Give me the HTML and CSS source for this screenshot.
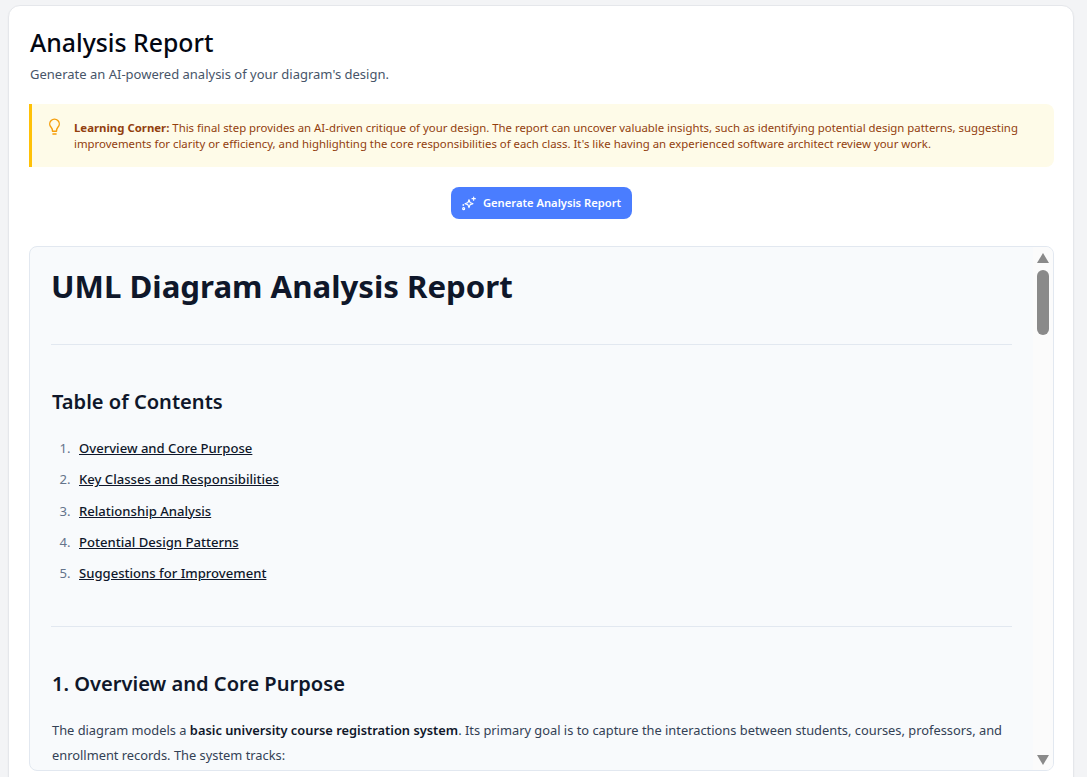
FILE: index.html
```html
<!DOCTYPE html>
<html lang="en">
<head>
    <meta charset="UTF-8">
    <title>Analysis Report</title>
    <link rel="stylesheet" href="styles.css">
</head>
<body>
<div class="card">
    <div class="page-head">
        <h2 class="page-title">Analysis Report</h2>
        <p class="page-sub">Generate an AI-powered analysis of your diagram's design.</p>
    </div>

    <div class="tip">
        <svg class="tip-icon" viewBox="0 0 24 24" fill="none" stroke="currentColor" stroke-width="1.8" stroke-linecap="round" stroke-linejoin="round">
            <path d="M9.500 18h5M10 21.500h4M9.500 18c0-2.500-.5-3.500-1.800-5a6 6 0 1 1 8.600 0c-1.300 1.500-1.800 2.500-1.800 5"/>
        </svg>
        <p><strong>Learning Corner:</strong> This final step provides an AI-driven critique of your design. The report can uncover valuable insights, such as identifying potential design patterns, suggesting improvements for clarity or efficiency, and highlighting the core responsibilities of each class. It's like having an experienced software architect review your work.</p>
    </div>

    <div class="action">
        <button class="gen-btn">
            <svg viewBox="0 0 24 24" fill="none" stroke="currentColor" stroke-width="1.7" stroke-linecap="round" stroke-linejoin="round">
                <path d="M12 7l1.600 4.400 4.400 1.600-4.400 1.600L12 19l-1.600-4.400L6 13l4.400-1.600z"/>
                <path d="M19 3v5M16.500 5.500h5"/>
                <circle cx="4" cy="20.500" r="1.500"/>
                <circle cx="3.500" cy="15" r=".5"/>
            </svg>
            <span class="gen-label">Generate Analysis Report</span>
        </button>
    </div>

    <div class="report-box">
        <div class="report">
            <h1>UML Diagram Analysis Report</h1>
            <hr>
            <h2>Table of Contents</h2>
            <ol>
                <li><a href="#">Overview and Core Purpose</a></li>
                <li><a href="#">Key Classes and Responsibilities</a></li>
                <li><a href="#">Relationship Analysis</a></li>
                <li><a href="#">Potential Design Patterns</a></li>
                <li><a href="#">Suggestions for Improvement</a></li>
            </ol>
            <hr>
            <h2>1. Overview and Core Purpose</h2>
            <p>The diagram models a <strong>basic university course registration system</strong>. Its primary goal is to capture the interactions between students, courses, professors, and enrollment records. The system tracks:</p>
        </div>
        <div class="scrollbar">
            <span class="arrow-up"></span>
            <span class="thumb"></span>
            <span class="arrow-down"></span>
        </div>
    </div>
</div>
</body>
</html>
```

FILE: styles.css
```css
* {
    box-sizing: border-box;
}

html, body {
    height: 100%;
}

body {
    margin: 0;
    padding: 5px 13px 0 8px;
    background: #f3f4f6;
    font-family: "Noto Sans", "Open Sans", sans-serif;
    color: #0f172a;
    overflow: hidden;
}

.card {
    background: #fff;
    border: 1px solid #e5e7eb;
    border-radius: 12px;
    padding: 20px 19px 0 20px;
    height: 790px;
    box-shadow: 0 1px 2px rgba(0, 0, 0, 0.05);
}

.page-head {
    padding-left: 1px;
}

.page-title {
    margin: 0;
    font-size: 24.800px;
    line-height: 32px;
    font-weight: 500;
    color: #030712;
}

.page-sub {
    margin: 6px 0 0;
    font-size: 13px;
    line-height: 20px;
    color: #475569;
}

.tip {
    display: flex;
    gap: 10px;
    margin-top: 20px;
    padding: 15.500px 16px 15.500px 13px;
    background: #fefbe8;
    border-left: 3px solid #ffc107;
    border-radius: 0 8px 8px 0;
}

.tip-icon {
    width: 19px;
    height: 19px;
    flex: none;
    color: #f59e0b;
    margin-top: -2.500px;
}

.tip p {
    margin: 0;
    font-size: 11.390px;
    line-height: 16px;
    color: #92400e;
}

.tip strong {
    font-weight: 700;
}

.action {
    display: flex;
    justify-content: center;
    margin-top: 20px;
}

.gen-btn {
    display: flex;
    align-items: center;
    gap: 6px;
    height: 32px;
    padding: 0 11px 0 10px;
    border: 0;
    border-radius: 8px;
    background: #4a7dff;
    color: #fff;
    font-family: inherit;
    font-size: 11.200px;
    font-weight: 600;
}

.gen-btn svg {
    width: 16px;
    height: 16px;
}

.gen-label {
    margin-top: -2px;
}

.report-box {
    display: flex;
    margin-top: 27px;
    height: 525px;
    border: 1px solid #e2e8f0;
    border-radius: 8px;
    background: #f8fafc;
    overflow: hidden;
}

.report {
    flex: 1;
    min-width: 0;
    padding: 19px 21px;
}

.report h1 {
    margin: 0;
    font-size: 31.200px;
    line-height: 40px;
    font-weight: 700;
}

.report hr {
    border: 0;
    border-top: 1px solid #e2e8f0;
    margin: 38px 0 42.500px;
}

.report ol + hr {
    margin-top: 41px;
}

.report h2 {
    margin: 0 0 20px 1px;
    font-size: 20.100px;
    line-height: 28px;
    font-weight: 600;
}

.report ol {
    margin: 21.500px 0 0 1px;
    padding-left: 22px;
}

.report li {
    padding-left: 5px;
    font-size: 13.100px;
    line-height: 23px;
    margin-bottom: 8.250px;
    color: #64748b;
}

.report li a {
    color: #0f172a;
    font-weight: 500;
}

.report p {
    margin: 0 0 0 1px;
    font-size: 12.850px;
    line-height: 25px;
    color: #334155;
}

.report p strong {
    color: #0f172a;
    font-weight: 600;
}

/* scrollbar is drawn by hand, the browser hides its own here */
.scrollbar {
    flex: none;
    display: flex;
    flex-direction: column;
    align-items: center;
    width: 20px;
    padding: 6px 0 5px;
    background: #fbfbfb;
}

.arrow-up,
.arrow-down {
    width: 0;
    height: 0;
    border-left: 6px solid transparent;
    border-right: 6px solid transparent;
}

.arrow-up {
    border-bottom: 10px solid #8a8a8a;
}

.arrow-down {
    margin-top: auto;
    border-top: 10px solid #8a8a8a;
}

.thumb {
    width: 12px;
    height: 65px;
    margin-top: 7px;
    border-radius: 6px;
    background: #8a8a8a;
}
```
